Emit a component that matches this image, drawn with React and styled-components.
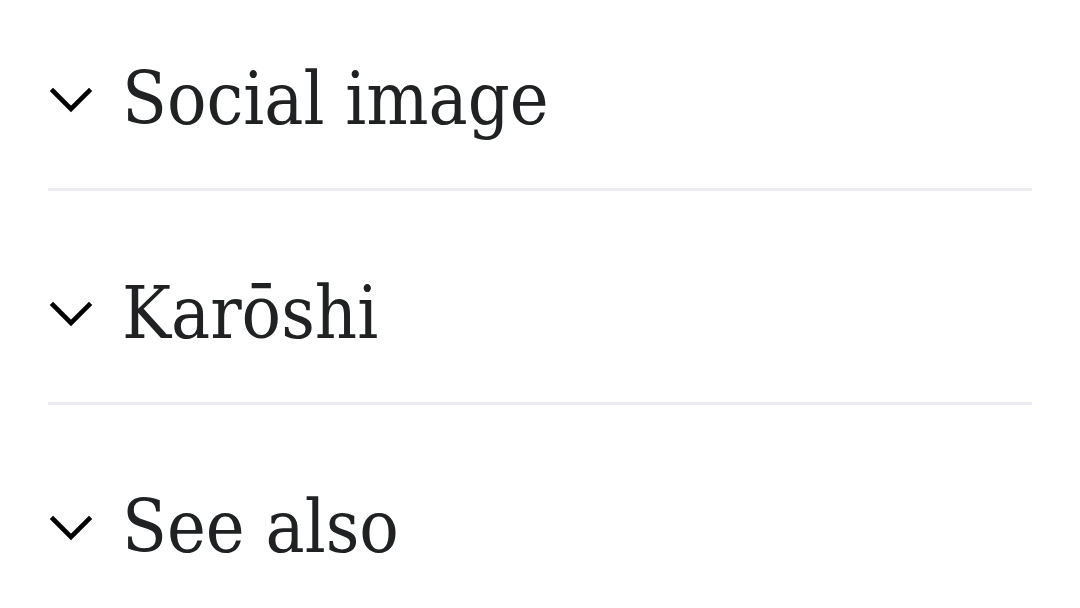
import React from "react";
import styled, { createGlobalStyle } from "styled-components";

const GlobalStyle = createGlobalStyle`
  html, body {
    margin: 0;
    padding: 0;
    background: #ffffff;
  }
  body {
    overflow: hidden;
  }
`;

const Page = styled.div`
  width: 1080px;
  height: 608px;
  overflow: hidden;
  box-sizing: border-box;
  padding: 0 48px;
`;

const List = styled.div`
  margin-top: -23px;
`;

const Section = styled.div`
  height: 214px;
  box-sizing: border-box;
  border-bottom: 3px solid #eaecf0;
  padding-top: 72px;
`;

const Heading = styled.h2`
  margin: 0;
  display: flex;
  align-items: center;
  gap: 28px;
  font-family: "DejaVu Serif Condensed", "DejaVu Serif", serif;
  font-weight: normal;
  font-size: 73px;
  line-height: 100px;
  color: #202122;
`;

const Chevron = styled.svg`
  width: 46px;
  height: 46px;
  flex-shrink: 0;
  margin-top: 6px;
`;

const sections = ["Social image", "Karōshi", "See also"];

function Arrow() {
  return (
    <Chevron viewBox="0 0 46 46" fill="none">
      <path
        d="M5 12 L23 30 L41 12"
        stroke="#000"
        strokeWidth="4.6"
        strokeLinecap="square"
        strokeLinejoin="miter"
      />
    </Chevron>
  );
}

export default function App() {
  return (
    <Page>
      <GlobalStyle />
      <List>
        {sections.map((title) => (
          <Section key={title}>
            <Heading>
              <Arrow />
              <span>{title}</span>
            </Heading>
          </Section>
        ))}
      </List>
    </Page>
  );
}
